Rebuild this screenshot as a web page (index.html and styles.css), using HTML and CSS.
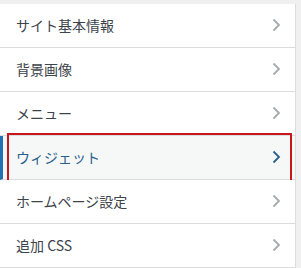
FILE: index.html
```html
<!DOCTYPE html>
<html lang="ja">
<head>
<meta charset="utf-8">
<link rel="stylesheet" href="styles.css">
</head>
<body>
<ul class="panel">
  <li class="row"><span class="label">サイト基本情報</span><svg class="chev" viewBox="0 0 9 14"><polyline points="1.5,1.5 7,7 1.5,12.5"/></svg></li>
  <li class="row"><span class="label">背景画像</span><svg class="chev" viewBox="0 0 9 14"><polyline points="1.5,1.5 7,7 1.5,12.5"/></svg></li>
  <li class="row"><span class="label">メニュー</span><svg class="chev" viewBox="0 0 9 14"><polyline points="1.5,1.5 7,7 1.5,12.5"/></svg></li>
  <li class="row active"><span class="label">ウィジェット</span><svg class="chev" viewBox="0 0 9 14"><polyline points="1.5,1.5 7,7 1.5,12.5"/></svg><span class="highlight"></span></li>
  <li class="row"><span class="label">ホームページ設定</span><svg class="chev" viewBox="0 0 9 14"><polyline points="1.5,1.5 7,7 1.5,12.5"/></svg></li>
  <li class="row"><span class="label">追加 CSS</span><svg class="chev" viewBox="0 0 9 14"><polyline points="1.5,1.5 7,7 1.5,12.5"/></svg></li>
</ul>
</body>
</html>
```
FILE: styles.css
```css
html, body {
  margin: 0;
  padding: 0;
  background: #f0f0f1;
}
body {
  font-family: "Noto Sans CJK JP", "Noto Sans", sans-serif;
}
.panel {
  list-style: none;
  margin: 4px 0 0 0;
  padding: 0;
  width: 296px;
  border-right: 1px solid #dcdcde;
  box-sizing: border-box;
  background: #fff;
}
.row {
  position: relative;
  display: flex;
  align-items: center;
  justify-content: space-between;
  height: 44px;
  box-sizing: border-box;
  padding: 0 14px 2px 16px;
  border-bottom: 1px solid #dcdcde;
  background: #fff;
  color: #3c434a;
  font-size: 14px;
}
.label {
  line-height: 20px;
  font-weight: 400;
}
.chev {
  width: 9px;
  height: 14px;
  fill: none;
  stroke: #a7aaad;
  stroke-width: 1.8;
}
.row.active {
  background: #f6f7f7;
  border-left: 3px solid #2271b1;
  padding-left: 13px;
  color: #2b5f8c;
}
.row.active .chev {
  stroke: #2b5f8c;
}
.highlight {
  position: absolute;
  left: 4px;
  top: -3px;
  width: 285px;
  height: 50px;
  box-sizing: border-box;
  border: 2px solid #c8161d;
}
```
